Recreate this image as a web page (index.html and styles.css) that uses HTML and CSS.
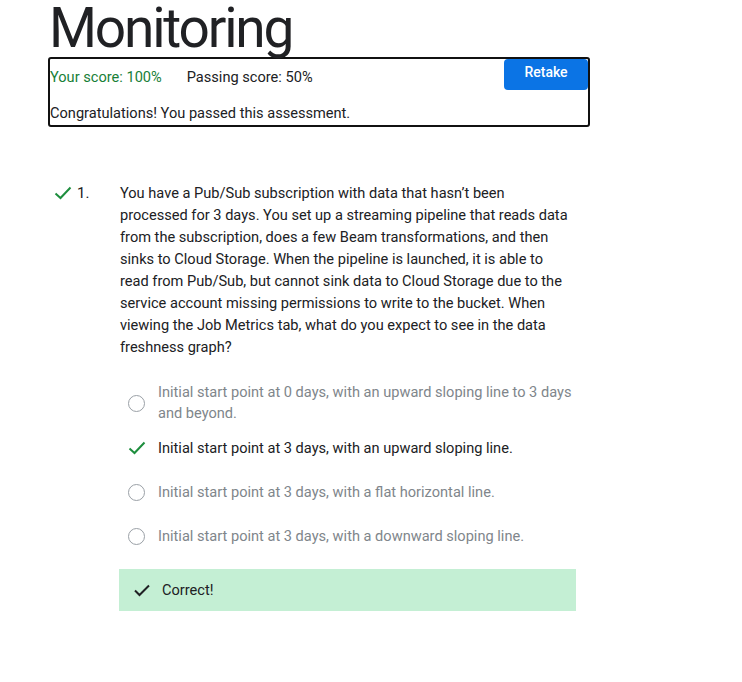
FILE: index.html
```html
<!DOCTYPE html>
<html>
<head>
<meta charset="utf-8">
<link rel="stylesheet" href="styles.css">
</head>
<body>
<div class="page">
  <h1 class="title">Monitoring</h1>
  <div class="result">
    <div class="score-row">
      <div class="scores">
        <span class="your-score">Your score: 100%</span>
        <span class="pass-score">Passing score: 50%</span>
      </div>
      <button class="retake">Retake</button>
    </div>
    <div class="congrats">Congratulations! You passed this assessment.</div>
  </div>

  <div class="question">
    <div class="q-head">
      <svg class="q-check" width="18" height="14" viewBox="0 0 18 14"><path d="M1.5 7.5 L6.5 12 L16.5 1.5" fill="none" stroke="#1e8e3e" stroke-width="2"/></svg>
      <span class="q-num">1.</span>
    </div>
    <div class="q-body">
      <p class="q-text">You have a Pub/Sub subscription with data that hasn’t been processed for 3 days. You set up a streaming pipeline that reads data from the subscription, does a few Beam transformations, and then sinks to Cloud Storage. When the pipeline is launched, it is able to read from Pub/Sub, but cannot sink data to Cloud Storage due to the service account missing permissions to write to the bucket. When viewing the Job Metrics tab, what do you expect to see in the data freshness graph?</p>
      <div class="options">
        <div class="option">
          <span class="marker"><span class="radio"></span></span>
          <span class="opt-text">Initial start point at 0 days, with an upward sloping line to 3 days and beyond.</span>
        </div>
        <div class="option selected">
          <span class="marker"><svg width="18" height="14" viewBox="0 0 18 14"><path d="M1.5 7.5 L6.5 12 L16.5 1.5" fill="none" stroke="#1e8e3e" stroke-width="2"/></svg></span>
          <span class="opt-text">Initial start point at 3 days, with an upward sloping line.</span>
        </div>
        <div class="option">
          <span class="marker"><span class="radio"></span></span>
          <span class="opt-text">Initial start point at 3 days, with a flat horizontal line.</span>
        </div>
        <div class="option">
          <span class="marker"><span class="radio"></span></span>
          <span class="opt-text">Initial start point at 3 days, with a downward sloping line.</span>
        </div>
      </div>
      <div class="feedback">
        <svg width="16" height="13" viewBox="0 0 16 13"><path d="M1 6.5 L5.5 11 L15 1.5" fill="none" stroke="#202124" stroke-width="2"/></svg>
        <span>Correct!</span>
      </div>
    </div>
  </div>
</div>
</body>
</html>
```

FILE: styles.css
```css
html, body {
  margin: 0;
  padding: 0;
  background: #fff;
}
body {
  font-family: Roboto, "Liberation Sans", sans-serif;
  font-size: 14.6px;
  color: #202124;
}
.page {
  padding-left: 48px;
  width: 542px;
}
.title {
  font-family: Roboto, sans-serif;
  font-weight: 400;
  font-size: 55px;
  line-height: 57px;
  letter-spacing: -2.2px;
  margin: 0 0 0 1px;
  color: #202124;
}
.result {
  border: 2px solid #111;
  border-radius: 3px;
  padding: 0 0 2px 0;
}
.score-row {
  display: flex;
  justify-content: space-between;
  align-items: flex-start;
}
.scores {
  display: flex;
  gap: 25px;
  padding-top: 8px;
  line-height: 20px;
}
.your-score { color: #188038; }
.retake {
  width: 84px;
  height: 31px;
  border: none;
  border-radius: 4px;
  background: #0b74e5;
  color: #fff;
  font-family: Roboto, sans-serif;
  font-size: 14px;
  font-weight: 500;
  padding: 0 0 6px 0;
}
.congrats {
  line-height: 20px;
  margin-top: 13px;
}
.question {
  display: flex;
  margin-top: 55px;
}
.q-head {
  width: 72px;
  flex: none;
  display: flex;
  align-items: center;
  height: 22px;
  padding-left: 6px;
  box-sizing: border-box;
  gap: 5px;
}
.q-num {
  font-size: 15px;
  color: #202124;
}
.q-body {
  width: 456px;
}
.q-text {
  margin: 0;
  line-height: 22px;
  max-width: 452px;
}
.options {
  margin-top: 22px;
}
.option {
  display: flex;
  align-items: center;
  padding: 2px 0 2px 8px;
  min-height: 40px;
  color: #80868b;
  line-height: 21px;
}
.option.selected { color: #202124; }
.marker {
  width: 20px;
  flex: none;
  display: flex;
  align-items: center;
  justify-content: flex-start;
  margin-right: 10px;
}
.radio {
  width: 15px;
  height: 15px;
  border: 1.5px solid #9aa0a6;
  border-radius: 50%;
}
.feedback {
  margin-top: 11px;
  margin-left: -1px;
  height: 42px;
  background: #c4efd4;
  display: flex;
  align-items: center;
  padding-left: 15px;
  gap: 12px;
  color: #202124;
}
```
